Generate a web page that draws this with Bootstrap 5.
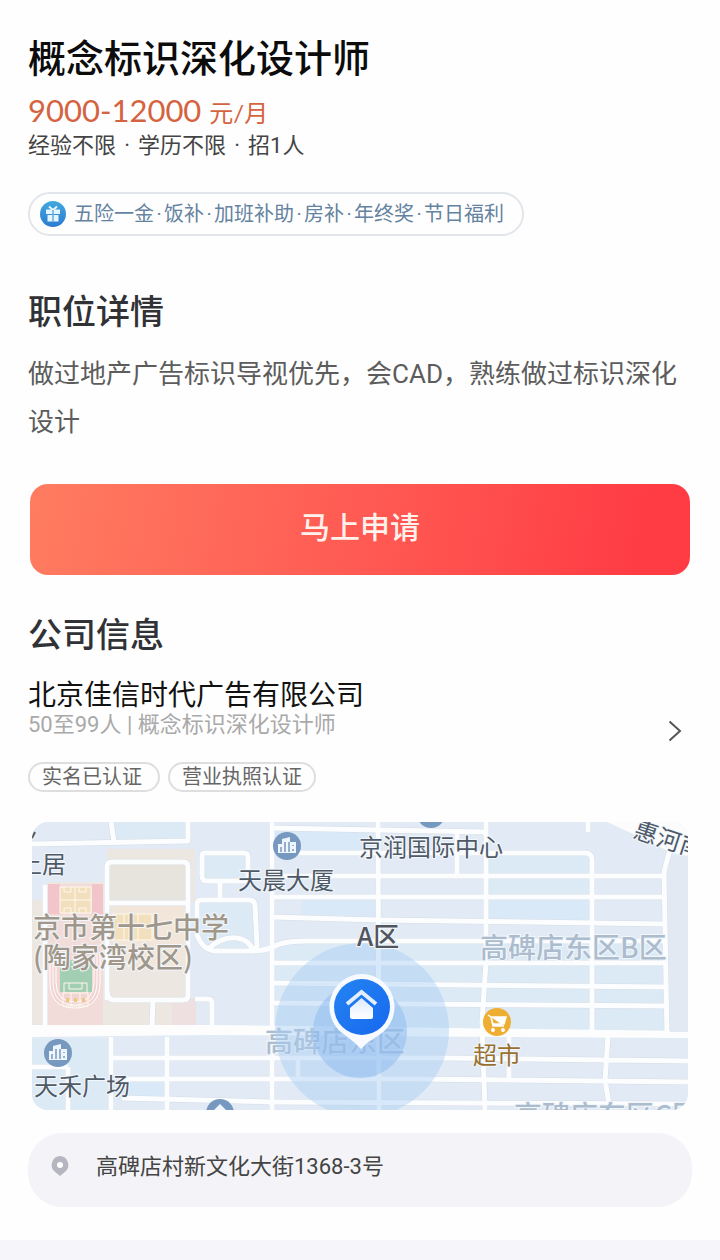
<!DOCTYPE html>
<html lang="zh-CN">
<head>
<meta charset="utf-8">
<meta name="viewport" content="width=device-width, initial-scale=1">
<title>概念标识深化设计师</title>
<link href="https://cdn.jsdelivr.net/npm/bootstrap@5.3.0/dist/css/bootstrap.min.css" rel="stylesheet">
<style>
body{font-family:Roboto,"Noto Sans CJK SC",sans-serif;background:#f5f5fa;color:#333}
.job-page{background:#fefefe;padding:35px 28px 33px}
.job-title{font-size:38px;line-height:48px;font-weight:500;color:#0c0c0c}
.salary{font-family:Lato,"Noto Sans CJK SC",sans-serif;font-size:31px;line-height:36px;color:#d5633f;margin-top:9px}
.salary-unit{font-size:24px}
.job-meta{font-size:22px;line-height:30px;color:#444}
.dot-wide{display:inline-block;width:22px;text-align:center}
.benefits{width:fit-content;margin-top:31px;height:44px;padding:0 18px 0 10px;border:2px solid #e2e5ea;border-radius:22px;font-size:20px;color:#6583a0;gap:8px}
.dot-slim{display:inline-block;width:10px;text-align:center}
.section-title{font-size:34px;line-height:48px;font-weight:500;color:#303236}
.detail-title{margin-top:52px}
.detail-text{font-size:26px;line-height:48px;color:#5c5c5c;margin-top:14px}
.apply-wrap{margin-top:38px;padding:0 2px}
.apply-btn,.apply-btn:hover{height:91px;padding:0 0 4px;border:0;border-radius:18px;font-size:30px;font-weight:500;color:#fff2ec;background:linear-gradient(100deg,#ff7c60,#ff5752 55%,#ff3c44 92%)}
.company-title{margin-top:36px}
.company-link{padding-top:22px;padding-right:10px}
.company-link svg{margin-bottom:12px}
.company-name{font-size:28px;line-height:30px;color:#111}
.company-sub{font-size:22px;line-height:28px;color:#a9a9a9}
.cert-list{gap:8px;margin-top:23px}
.cert{height:30px;padding:0 12px;border:2px solid #dedede;border-radius:15px;font-size:20px;line-height:26px;color:#666}
.cert:first-child{padding-right:16px}
.map-wrap{margin:30px 4px 0;border-radius:16px;overflow:hidden}
.map-wrap text{font-family:"Noto Sans CJK SC",sans-serif;paint-order:stroke;stroke:#f3f7fb;stroke-width:2px}
.address-bar{margin-top:23px;min-height:74px;border-radius:34px;background:#f4f4f8;padding:0 22px 8px;gap:26px;font-size:22px;color:#444}
.map-label{font-size:24px;fill:#4e5a68}
.map-zone{font-size:26px;fill:#505560;font-weight:500}
.map-area{font-size:28px;fill:#acbccf;font-weight:500}
.map-school{font-size:28px;fill:#a0978a;font-weight:500}
</style>
</head>
<body>
<main class="job-page">
  <h1 class="job-title mb-0">概念标识深化设计师</h1>
  <div class="salary">9000-12000 <span class="salary-unit">元/月</span></div>
  <div class="job-meta">经验不限<span class="dot-wide">·</span>学历不限<span class="dot-wide">·</span>招1人</div>

  <div class="benefits d-flex align-items-center">
    <svg width="26" height="26" viewBox="0 0 26 26" aria-hidden="true">
      <defs><linearGradient id="gift" x2="0" y2="1"><stop stop-color="#42a8e0"/><stop offset="1" stop-color="#2c7bd0"/></linearGradient></defs>
      <circle cx="13" cy="13" r="13" fill="url(#gift)"/>
      <path d="M13 9L9 5.500M13 9L17 5.500" fill="none" stroke="#e6f6ff" stroke-width="2"/>
      <path d="M6 8.500h14v4.500H6zM7.500 14h11v6.500h-11z" fill="#e6f6ff"/><path d="M13 9v11.500" stroke="#64aee2" stroke-width="1.500"/>
    </svg>
    <span>五险一金<span class="dot-slim">·</span>饭补<span class="dot-slim">·</span>加班补助<span class="dot-slim">·</span>房补<span class="dot-slim">·</span>年终奖<span class="dot-slim">·</span>节日福利</span>
  </div>

  <h2 class="section-title detail-title mb-0">职位详情</h2>
  <p class="detail-text mb-0">做过地产广告标识导视优先，会CAD，熟练做过标识深化设计</p>

  <div class="apply-wrap"><button type="button" class="btn apply-btn w-100 d-block">马上申请</button></div>

  <h2 class="section-title company-title mb-0">公司信息</h2>
  <a href="#" class="company-link d-flex align-items-center justify-content-between text-decoration-none">
    <div>
      <div class="company-name">北京佳信时代广告有限公司</div>
      <div class="company-sub">50至99人 | 概念标识深化设计师</div>
      <div class="cert-list d-flex flex-wrap">
        <span class="cert">实名已认证</span><span class="cert">营业执照认证</span>
      </div>
    </div>
    <svg width="14" height="22" viewBox="0 0 14 22" fill="none" stroke="#555" stroke-width="2" aria-hidden="true"><path d="M1.500 1.500L12 11L1.500 20.500"/></svg>
  </a>

  <div class="map-wrap">
    <svg class="d-block w-100" viewBox="0 0 656 288" role="img" aria-label="地图">
      <defs>
        <linearGradient id="pin" x2="1" y2="1"><stop stop-color="#2484f2"/><stop offset="1" stop-color="#1768ee"/></linearGradient>
        <linearGradient id="house" x2="0" y2="1"><stop stop-color="#dcebff"/><stop offset="1" stop-color="#fff"/></linearGradient>
        <g id="building">
          <circle r="14" fill="#7798bf"/>
          <path d="M-9 7V-2h4V-7L3-9V-4h6V7z" fill="#eef5fc"/>
          <path d="M-6 1v5M-2-4V6M2-4V6M6-1v1M6 3v2" stroke="#7798bf" stroke-width="1.500"/>
        </g>
        <g id="roads" fill="none" stroke-linejoin="round">
          <path d="M0 22L156 19V0M79 0L82 20M13 63V203M75 178V44Q75 40 80 40H151Q156 40 156 45V173Q156 178 151 178H82Q75 178 75 168M75 81H156M121 178L120 205M163 177H176Q180 177 180 181V206"/>
          <path d="M172 31H212Q216 31 216 35V56Q216 59 212 59H175Q170 59 170 54V35Q170 31 172 31M188 59V78M169 78H217Q222 78 223 83L225 124Q224 129 218 129H182Q170 127 165 113V82Q165 78 169 78M176 127Q190 114 205 116Q218 118 221 129"/>
          <path d="M218 129Q235 129 245 123Q255 119 275 119H635M240 0V288M346 0L347 288M454 0V140L450 200L453 288M425 11V54"/>
          <path d="M240 6L454 10M266 31H553Q560 31 560 38V213M240 54H633M240 75H633M240 95L346 98L633 102M240 141H635M240 161L635 165M240 181L635 184M556 0V10M640 20L632 50L635 213"/>
          <path d="M79 236H410L656 239M90 257H380L656 260M90 276L240 280L656 282M79 215V288M135 215V288M36 245V288M0 245H36M266 236V257M477 213V258M576 214L573 258L577 282"/>
        </g>
      </defs>
      <rect width="656" height="288" fill="#e1eaf5"/>
      <path d="M82 0H152V18H82zM170 32h46v26h-46zM166 80h56l2 48h-45l-13-18zM0 217h78v71H0zM242 122h391v90H242zM456 32h103v70H456z" fill="#dceaf5"/>
      <path d="M454 78h105v20H454zM242 8h100v22H242zM82 259h50v17H82zM270 77h74v18h-74z" fill="#dae9f7"/>
      <path d="M75 27H163V80H156V205H0V78H15V60H75z" fill="#ece7e1"/>
      <path d="M78 43h75v36H78z" fill="#e6e4dc"/><path d="M140 176h24v29h-24z" fill="#eedfe0"/><path d="M83 84h68v60H83z" fill="#f1e6d9"/>
      <rect x="16" y="62" width="55" height="142" fill="#f2dcd9"/>
      <path d="M16 62H28V92H16zM60 62H71V92H60z" fill="#f1c5c9"/>
      <path d="M28 65h31v26H28zM80 92h40v26H80z" fill="#f2dfbd"/>
      <path d="M28 65h31v26H28zM43 65v26M28 78h31M32 65v5h7v-5M47 65v5h7v-5M32 91v-5h7v5M47 91v-5h7v5M80 92h40v26H80zM92 92v26M106 92v26" fill="none" stroke="#fff9ed"/>
      <path d="M18 130V160Q18 186 43 186Q68 186 68 160V130" fill="#f1d5d3" stroke="#fff"/>
      <path d="M21 130V160Q21 183 43 183Q65 183 65 160V130M24 130V160Q24 180 43 180Q62 180 62 160V130" fill="none" stroke="#fff"/>
      <path d="M28 138H60V170H28z" fill="#a2ceb3"/><path d="M32 171V161H55V171M37 161V167H50V161M31 171H56V184H31zM39 171v13M48 171v13" fill="none" stroke="#fff8e9"/><path d="M34 178h3M42 178h3M50 178h3" stroke="#f1c57b" stroke-width="4"/>
      <use href="#roads" stroke="#d6dce4" stroke-width="6"/>
      <use href="#roads" stroke="#fcfdff" stroke-width="5"/>
      <path d="M0 203H180L656 209V216L330 214L180 213L0 215z" fill="#fdfdfe"/>
      <path d="M575 0H656V34L640 31L610 16z" fill="#fcfcfd"/>
      <path d="M640 35L656 34V210H638L635 50z" fill="#e2e9f3"/>
      <text class="map-area" x="233" y="230">高碑店东区</text>
      <circle cx="330" cy="208" r="87" fill="#a9cff5" fill-opacity=".45"/>
      <circle cx="328" cy="209" r="47" fill="#84b5ef" fill-opacity=".45"/>
      <text class="map-label" x="-14" y="51">上居</text>
      <path d="M0 16L3 10" stroke="#555" stroke-width="2"/>
      <text class="map-school" x="1" y="116">京市第十七中学</text>
      <text class="map-school" x="1" y="146">(陶家湾校区)</text>
      <text class="map-label" x="206" y="67">天晨大厦</text>
      <text class="map-label" x="327" y="34">京润国际中心</text>
      <text class="map-zone" x="325" y="124">A区</text>
      <text class="map-area" x="448" y="136">高碑店东区B区</text>
      <text class="map-area" x="482" y="304">高碑店东区C区</text>
      <text class="map-label" x="2" y="273">天禾广场</text>
      <text class="map-label" transform="translate(600 15) rotate(18)">惠河南</text>
      <text class="map-label" x="441" y="242" style="fill:#98712f">超市</text>
      <use href="#building" x="255" y="24"/><use href="#building" x="26" y="231"/>
      <circle cx="399" cy="-8" r="14" fill="#7798bf"/>
      <circle cx="188" cy="291" r="14" fill="#7798bf"/><path d="M180 290L188 282L196 290z" fill="#eef5fc"/>
      <circle cx="465" cy="200" r="14" fill="#eeae31"/>
      <path d="M456 193l3 2l2 9h11M459 195h15l-2 7h-11z" fill="#fff" stroke="#fff" stroke-width="1.500"/><circle cx="461" cy="208" r="2" fill="#fff"/><circle cx="471" cy="208" r="2" fill="#fff"/>
      <path d="M330 152a33 33 0 0 1 17 61L335 221L329 227L323 221L313 213A33 33 0 0 1 330 152z" fill="#f7fbff"/>
      <circle cx="330" cy="185" r="28" fill="url(#pin)"/>
      <path d="M315 182L329.500 170L344 182" fill="none" stroke="#e3efff" stroke-width="4"/><path d="M318 186L329.500 176L341 186V195Q341 197 339 197H320Q318 197 318 195z" fill="url(#house)"/>
    </svg>
  </div>

  <div class="address-bar d-flex align-items-center">
    <svg width="20" height="22" viewBox="0 0 20 22" aria-hidden="true"><path d="M10 1a9 9 0 0 1 6 15L10 21L4 16A9 9 0 0 1 10 1z" fill="#b6b6c0"/><circle cx="10" cy="10" r="3" fill="#fff"/></svg>
    <span>高碑店村新文化大街1368-3号</span>
  </div>
</main>
<script src="https://cdn.jsdelivr.net/npm/bootstrap@5.3.0/dist/js/bootstrap.bundle.min.js"></script>
</body>
</html>
